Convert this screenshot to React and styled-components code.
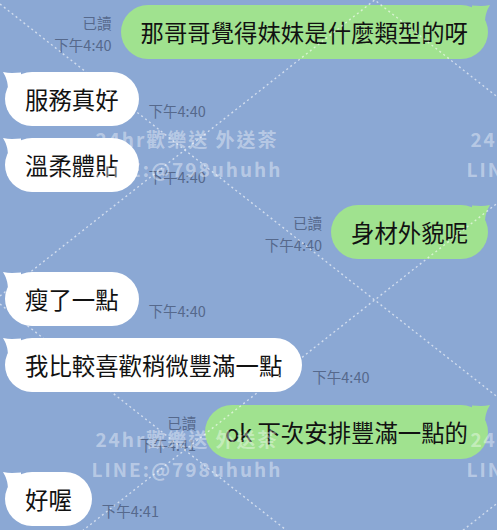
import React from 'react'
import styled, { createGlobalStyle } from 'styled-components'

const GlobalStyle = createGlobalStyle`
    html, body {
        margin: 0;
        padding: 0;
        background: #8ba8d4;
    }
    body {
        font-family: "Noto Sans CJK TC", "Noto Sans", sans-serif;
    }
`

const Screen = styled.div`
    position: relative;
    width: 497px;
    height: 530px;
    overflow: hidden;
    box-sizing: border-box;
    padding-top: 5px;
    display: flex;
    flex-direction: column;
    gap: 12.7px;
    background: #8ba8d4;
`

const Row = styled.div`
    display: flex;
    align-items: flex-end;
    justify-content: flex-start;
    flex-direction: ${(p) => (p.$mine ? 'row-reverse' : 'row')};
    padding: ${(p) => (p.$mine ? '0 9px 0 0' : '0 0 0 5px')};
`

const Bubble = styled.div`
    position: relative;
    font-size: 23.4px;
    line-height: 32px;
    color: #121212;
    padding: 11px 20px;
    border-radius: 27px;
    white-space: nowrap;
    background: ${(p) => (p.$mine ? '#a0e28f' : '#ffffff')};
`

const Tail = styled.svg`
    position: absolute;
    top: 0;
    width: 18px;
    height: 18px;
    ${(p) => (p.$mine ? 'right: -2px; transform: scaleX(-1);' : 'left: -2px;')}
`

const Meta = styled.div`
    display: flex;
    flex-direction: column;
    align-items: ${(p) => (p.$mine ? 'flex-end' : 'flex-start')};
    margin: ${(p) => (p.$mine ? '0 9px 3px 0' : '0 0 4px 10px')};
    font-size: 14.5px;
    line-height: 22px;
    color: #56698c;
    white-space: nowrap;
`

const Overlay = styled.div`
    position: absolute;
    inset: 0;
    pointer-events: none;
`

const Lines = styled.svg`
    position: absolute;
    inset: 0;
`

const Mark = styled.div`
    position: absolute;
    transform: translateX(-50%);
    display: flex;
    flex-direction: column;
    align-items: center;
    color: rgba(255, 255, 255, 0.4);
    font-weight: 700;
    font-size: 19px;
    line-height: 30px;
    letter-spacing: 2px;
    white-space: nowrap;
`

const messages = [
    { mine: true, text: '那哥哥覺得妹妹是什麼類型的呀', time: '下午4:40' },
    { mine: false, text: '服務真好', time: '下午4:40' },
    { mine: false, text: '溫柔體貼', time: '下午4:40' },
    { mine: true, text: '身材外貌呢', time: '下午4:40' },
    { mine: false, text: '瘦了一點', time: '下午4:40' },
    { mine: false, text: '我比較喜歡稍微豐滿一點', time: '下午4:40' },
    { mine: true, text: 'ok 下次安排豐滿一點的', time: '下午4:41' },
    { mine: false, text: '好喔', time: '下午4:41' },
]

const slope = 0.79
const up = [-296, 4, 304]
const down = [296, 596, 896]
const marks = [
    { x: 187, y: 124 },
    { x: 562, y: 124 },
    { x: 187, y: 424 },
    { x: 562, y: 424 },
]

const Watermark = () => (
    <Overlay>
        <Lines width="497" height="530">
            {up.map((c) => (
                <line key={'u' + c} x1="0" y1={c} x2="497" y2={c + slope * 497}
                    stroke="rgba(255,255,255,0.6)" strokeWidth="1.4" strokeDasharray="2 3" />
            ))}
            {down.map((c) => (
                <line key={'d' + c} x1="0" y1={c} x2="497" y2={c - slope * 497}
                    stroke="rgba(255,255,255,0.6)" strokeWidth="1.4" strokeDasharray="2 3" />
            ))}
        </Lines>
        {marks.map((m) => (
            <Mark key={m.x + '-' + m.y} style={{ left: m.x, top: m.y }}>
                <span>24hr歡樂送 外送茶</span>
                <span>LINE:@798uhuhh</span>
            </Mark>
        ))}
    </Overlay>
)

const App = () => {
    return (
        <>
            <GlobalStyle />
            <Screen>
                {messages.map((m, i) => (
                    <Row key={i} $mine={m.mine}>
                        <Bubble $mine={m.mine}>
                            <Tail $mine={m.mine} viewBox="0 0 18 18">
                                <path d="M0 0 C6 1.5 12 1 18 0.5 L18 18 L5 18 C5 10 3 5 0 0 Z"
                                    fill={m.mine ? '#a0e28f' : '#ffffff'} />
                            </Tail>
                            {m.text}
                        </Bubble>
                        <Meta $mine={m.mine}>
                            {m.mine && <span>已讀</span>}
                            <span>{m.time}</span>
                        </Meta>
                    </Row>
                ))}
                <Watermark />
            </Screen>
        </>
    )
}

export default App
